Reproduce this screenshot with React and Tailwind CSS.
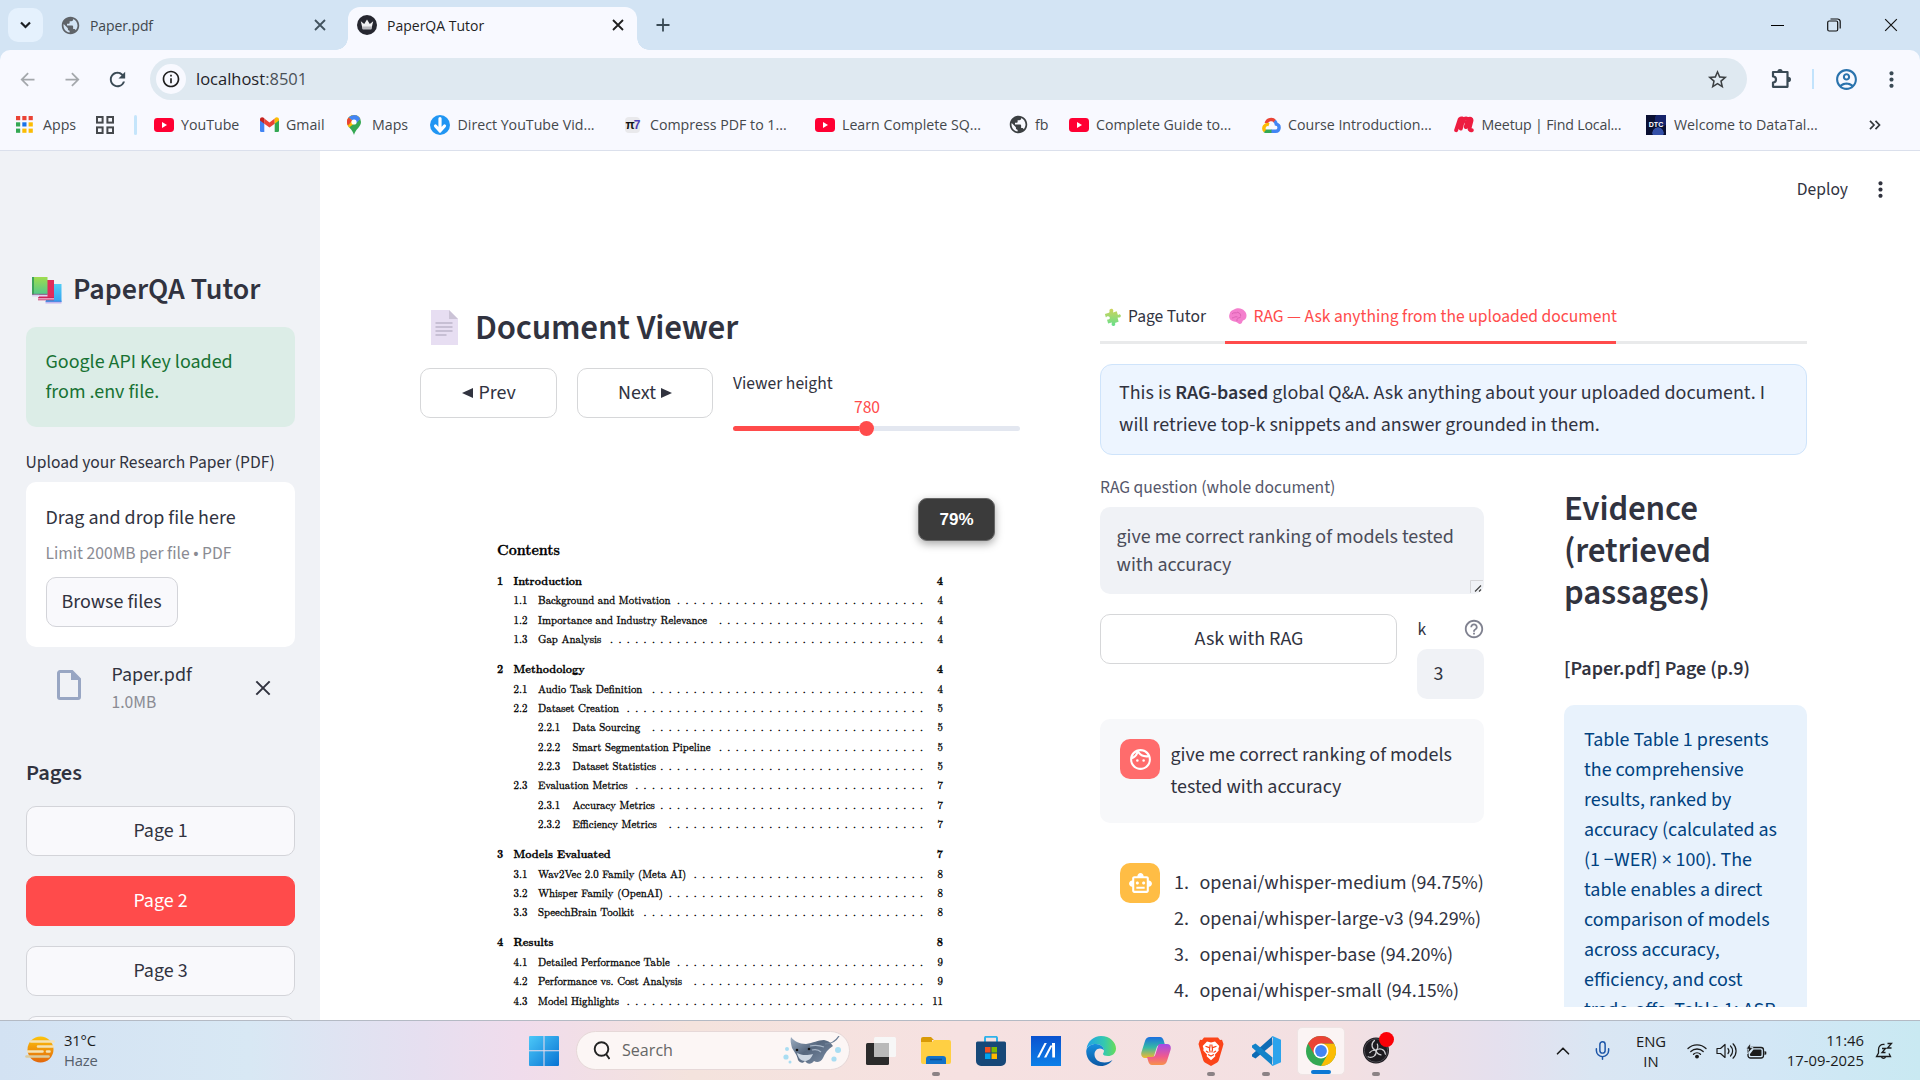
import React from 'react';
import {
  MdPublic, MdStarOutline, MdOutlineAccountCircle, MdOutlineInfo,
  MdHelpOutline, MdOutlineFace, MdOutlineSmartToy, MdArrowBack, MdArrowForward, MdRefresh, MdMoreVert,
} from 'react-icons/md';
import { ChevronUp, Mic } from 'lucide-react';

/* ---------- small drawings ---------- */

const Close = ({ size = 12, w = 1.8, color = '#1f1f1f' }) => (
  <svg width={size} height={size} viewBox="0 0 12 12" fill="none" stroke={color} strokeWidth={w}>
    <path d="M1 1L11 11M11 1L1 11" />
  </svg>
);

const Crown = () => (
  <svg width="20" height="20" viewBox="0 0 20 20">
    <circle cx="10" cy="10" r="10" fill="#262730" />
    <path d="M3.800 6.300l3.400 2.600L10 4.400l2.800 4.500 3.400-2.600-1.900 7.900H5.700z" fill="#f1f1f3" />
    <path d="M5.200 11.600h9.600l-.5 2.600H5.700z" fill="#b9b9bf" />
  </svg>
);

const AppsGrid = () => {
  const c = ['#ea4335', '#ea4335', '#ea4335', '#34a853', '#1a73e8', '#fbbc04', '#34a853', '#fbbc04', '#fbbc04'];
  return (
    <svg width="17" height="17" viewBox="0 0 17 17">
      {c.map((f, i) => <rect key={i} x={(i % 3) * 6.3} y={Math.floor(i / 3) * 6.3} width="4.2" height="4.2" fill={f} />)}
    </svg>
  );
};

const TabGroups = () => (
  <svg width="18" height="18" viewBox="0 0 18 18" fill="none" stroke="#46494d" strokeWidth="2">
    <rect x="1" y="1" width="5.6" height="5.6" /><rect x="11.4" y="1" width="5.6" height="5.6" />
    <rect x="1" y="11.4" width="5.6" height="5.6" /><rect x="11.4" y="11.4" width="5.6" height="5.6" />
  </svg>
);

const Extension = () => (
  <svg width="22" height="22" viewBox="0 0 22 22">
    <path d="M3 4h14.500v14.800H3v-4.300a3 3 0 0 0 0-6z" fill="none" stroke="#3a4a55" strokeWidth="2.200" strokeLinejoin="round" />
    <path d="M7.300 4a2.700 3 0 0 1 5.400 0zM18 8.700a3 2.700 0 0 1 0 5.400z" fill="#3a4a55" />
  </svg>
);

const YouTube = () => (
  <svg width="20" height="14" viewBox="0 0 20 14">
    <rect width="20" height="14" rx="3.4" fill="#ff0033" />
    <path d="M8 4l5 3-5 3z" fill="#fff" />
  </svg>
);

const Gmail = () => (
  <svg width="19" height="15" viewBox="0 0 19 15">
    <path d="M0 2.5L4.3 5.6V15H1.3A1.3 1.3 0 0 1 0 13.700z" fill="#4285f4" />
    <path d="M19 2.500L14.700 5.600V15h3A1.300 1.300 0 0 0 19 13.700z" fill="#34a853" />
    <path d="M4.300 1.500L9.500 5.400l5.200-3.900v5.200L9.500 10.600 4.300 6.700z" fill="#ea4335" />
    <path d="M0 2.500C0 .5 2.200-.5 3.700.8l.6.5v5.400L0 3.500z" fill="#c5221f" />
    <path d="M19 2.500c0-2-2.200-3-3.700-1.700l-.6.5v5.400L19 3.500z" fill="#fbbc04" />
  </svg>
);

const MapsPin = () => (
  <svg width="14" height="20" viewBox="0 0 14 20">
    <path d="M7 0a7 7 0 0 1 7 7c0 5-5.600 7-7 13C5.600 14 0 12 0 7a7 7 0 0 1 7-7z" fill="#34a853" />
    <path d="M7 0a7 7 0 0 1 6.300 4L2 12.400C.8 11 0 9.300 0 7a7 7 0 0 1 7-7z" fill="#fbbc04" />
    <path d="M7 0a7 7 0 0 1 6.300 4L9 8.500 1.600 2.600A7 7 0 0 1 7 0z" fill="#4285f4" />
    <path d="M1.600 2.600L5.200 5.700 1 10.600A7 7 0 0 1 1.600 2.600z" fill="#ea4335" />
    <circle cx="7" cy="7" r="2.600" fill="#fff" />
  </svg>
);

const BlueDown = () => (
  <svg width="20" height="20" viewBox="0 0 20 20">
    <circle cx="10" cy="10" r="10" fill="#2196f3" />
    <path d="M10 3.500v10M10 16l-4.500-5M10 16l4.500-5" stroke="#fff" strokeWidth="3.200" strokeLinecap="round" fill="none" />
  </svg>
);

const Pi = () => (
  <div className="flex h-[16px] w-[15px] items-center justify-center rounded-[4px] bg-[#e9e9ec] font-[Liberation_Sans] text-[12px] font-bold leading-none tracking-[-1px]">
    <span className="text-[#111]">π</span><span className="text-[#4a3fb5]">7</span>
  </div>
);

const Cloud = () => (
  <svg width="20" height="16" viewBox="0 0 20 16" fill="none" strokeWidth="3.400">
    <path d="M5.200 6.200A5.200 5.200 0 0 1 14 4.300" stroke="#ea4335" />
    <path d="M13.600 4A5.500 5.500 0 0 1 15.300 7.200 3.600 3.600 0 0 1 14.600 14.300H10" stroke="#4285f4" />
    <path d="M10.500 14.300H5.600a3.800 3.800 0 0 1-2-.6" stroke="#34a853" />
    <path d="M4 14A3.900 3.900 0 0 1 8 7.600" stroke="#fbbc04" />
  </svg>
);

const MeetupMark = () => (
  <svg width="20" height="17" viewBox="0 0 20 17" fill="none" stroke="#ed1c40" strokeWidth="4" strokeLinecap="round" strokeLinejoin="round">
    <path d="M2.200 14.200L5.800 3.200c1.600-1.400 3.400-.8 3.200.8L6.800 12.500M8.600 6.500l1.600-3c1.800-1.600 3.800-1 3.400 1L11.800 11M13 6.500l1.400-3c1.600-1.300 3.400-.6 3 1.200l-1.800 7c-.3 1.800.6 2.700 2.200 2.500" />
  </svg>
);

const Dtc = () => (
  <div className="flex h-[20px] w-[20px] items-center justify-center bg-[#0a1033] bg-[radial-gradient(circle_at_60%_90%,#3450a8_0_25%,transparent_27%),radial-gradient(circle_at_80%_20%,#16246b_0_30%,transparent_32%)] font-[Liberation_Sans] text-[7px] font-bold text-white">DTC</div>
);

const Books = () => (
  <svg width="30" height="27" viewBox="0 0 30 27">
    <defs>
      <linearGradient id="bg1" x1="0" y1="0" x2="0" y2="1"><stop stopColor="#9fdc4e" /><stop offset="1" stopColor="#55c98a" /></linearGradient>
      <linearGradient id="bg2" x1="0" y1="0" x2="0" y2="1"><stop stopColor="#52cdf6" /><stop offset="1" stopColor="#35a3f0" /></linearGradient>
    </defs>
    <rect x="14" y="7" width="15.500" height="18" fill="url(#bg2)" />
    <path d="M13.500 24.500h16v2h-16z" fill="#c3b4ee" /><path d="M13.500 23.700h16v1h-16z" fill="#3b7fdc" />
    <rect x="7" y="3" width="15" height="18" fill="#e12c5b" />
    <path d="M6 21h16v2H6z" fill="#f3c3dd" /><path d="M6 20.300h16v1H6zM6 22.500h16v.8H6z" fill="#c22158" />
    <rect x="0" y="0" width="15.500" height="17" fill="url(#bg1)" />
    <rect x="0" y="0" width="2" height="18" fill="#3fa35b" />
    <path d="M0 17.500h15.500v2H0z" fill="#dcd0f2" /><path d="M0 16.800h15.500v1H0z" fill="#7f6a8c" />
  </svg>
);

const PageEmoji = () => (
  <svg width="27" height="35" viewBox="0 0 27 35">
    <path d="M0 0h18l9 9v26H0z" fill="#e7def2" /><path d="M18 0l9 9h-9z" fill="#cbc3d6" />
    <path d="M4.500 13h17M4.500 17h17M4.500 21h17M4.500 25h11" stroke="#a79fb5" strokeWidth="1.200" />
  </svg>
);

const Puzzle = () => (
  <svg width="17" height="19" viewBox="0 0 17 19">
    <defs><linearGradient id="pz" x1="0" y1="0" x2="0" y2="1"><stop stopColor="#cfd35a" /><stop offset="1" stopColor="#66e08c" /></linearGradient></defs>
    <path d="M5.500 3c-.6-2.300 3-3.300 3.700-1 .3 1-.2 1.600-.1 2.400l3.600-1.100 1.200 3.600c1 .1 1.300-.7 2.100-.5 1.300.3 1 2.900-.4 3.100-.8.100-1.200-.3-2 .2l1 4-3.200 1c-.7.700.2 1.500-.4 2.500-.8 1.200-3.200.8-3.400-.8-.1-.8.4-1.200.2-1.800l-3.700.9-1-3.500c.6-.8 1.800-.200 2.500-1.200.8-1.300-.5-3-2.100-2.500-.8.300-1 1-1.700 1L.9 5.900l4-1.100c.6-.4.7-1.200.6-1.800z" fill="url(#pz)" />
  </svg>
);

const Brain = () => (
  <svg width="18" height="17" viewBox="0 0 18 17">
    <path d="M5 1.500C8-.5 13-.3 15.500 3c2.500 2.500 2.500 6 1 8-1.200 1.400-2.600 1-3 2.300-.4 2.500-2.800 3.500-4.600 1.700C7.500 13.600 5.500 14 3.500 13 .5 12-.6 8.600.6 6 1 3.500 2.800 2.300 5 1.500z" fill="#f47fcd" />
    <path d="M3 6c2-2.500 4 0 6-2M3 10c2 0 3-2 5.500-1M9 4.500c2 .5 3 2 2.500 4M8 13c-.5-2 1-3.500 3.500-3.500" stroke="#dc62b4" strokeWidth="1" fill="none" />
  </svg>
);

const FileIcon = () => (
  <svg width="24" height="30" viewBox="0 0 24 30">
    <path d="M3 1.500h12L22.500 9v18a1.500 1.500 0 0 1-1.500 1.500H3A1.500 1.500 0 0 1 1.500 27V3A1.500 1.500 0 0 1 3 1.500z" fill="none" stroke="#98a6c3" strokeWidth="3" />
    <path d="M14 1v9h9z" fill="#98a6c3" />
  </svg>
);

/* ---------- browser chrome ---------- */

const TabStrip = () => (
  <div className="flex h-[50px] items-center bg-[#d3e4f4] text-[14px]">
    <div className="ml-[8px] flex h-[34px] w-[35px] items-center justify-center rounded-[10px] bg-[#e5f1fd]">
      <svg width="11" height="8" viewBox="0 0 11 8" fill="none" stroke="#1b1f23" strokeWidth="2.200"><path d="M1 1.500l4.500 4.500L10 1.500" /></svg>
    </div>
    <div className="ml-[17px] flex w-[288px] items-center">
      <MdPublic size={21} color="#5f6368" className="shrink-0" />
      <span className="ml-[9px] w-[224px] tracking-[-0.1px] text-[#41474d]">Paper.pdf</span>
      <Close color="#41525e" />
    </div>
    <div className="relative mt-[7px] flex h-[43px] w-[289px] items-center rounded-t-[12px] bg-[#f8f9ff] pb-[7px]">
      <div className="absolute -left-[12px] bottom-0 h-[12px] w-[12px] bg-[radial-gradient(circle_at_0_0,transparent_11.500px,#f8f9ff_12px)]" />
      <div className="absolute -right-[12px] bottom-0 h-[12px] w-[12px] bg-[radial-gradient(circle_at_100%_0,transparent_11.500px,#f8f9ff_12px)]" />
      <div className="ml-[9px] shrink-0"><Crown /></div>
      <span className="ml-[10px] w-[225px] text-[#1f1f1f]">PaperQA Tutor</span>
      <Close />
    </div>
    <svg className="ml-[19px]" width="14" height="14" viewBox="0 0 14 14" stroke="#3a4a55" strokeWidth="1.800"><path d="M7 0.500v13M0.500 7h13" /></svg>
    <div className="ml-auto flex items-center pr-[22px]">
      <div className="h-[1px] w-[13px] bg-black" />
      <svg className="ml-[43px]" width="14" height="14" viewBox="0 0 14 14" fill="none" stroke="#111" strokeWidth="1.200">
        <rect x="0.700" y="3" width="10" height="10" rx="1.500" /><path d="M3.500 1h7A2.600 2.600 0 0 1 13.200 3.600v7" />
      </svg>
      <div className="ml-[43px]"><Close size={14} w={1} color="#111" /></div>
    </div>
  </div>
);

const Toolbar = () => (
  <div className="bg-[#d3e4f4]">
    <div className="flex h-[50px] items-center rounded-t-[10px] bg-[#f8f9ff] pt-[8px]">
      <div className="flex h-[42px] w-full items-center">
        <MdArrowBack className="ml-[17px]" size={21} color="#a4a8ac" />
        <MdArrowForward className="ml-[24px]" size={21} color="#a4a8ac" />
        <MdRefresh className="ml-[23px]" size={23} color="#3a4a55" />
        <div className="ml-[21px] flex h-[42px] w-[1597px] items-center rounded-full bg-[#dfe9f1] pl-[6px]">
          <div className="flex h-[30px] w-[30px] items-center justify-center rounded-full bg-[#f8f9ff]"><MdOutlineInfo size={20} color="#1f1f1f" /></div>
          <span className="ml-[10px] text-[16.500px] text-[#1f2328]">localhost<span className="text-[#4a5157]">:8501</span></span>
          <MdStarOutline className="ml-auto mr-[18px]" size={23} color="#3c4043" />
        </div>
        <div className="ml-[23px]"><Extension /></div>
        <div className="ml-[20px] h-[20px] w-[2px] bg-[#c2e3fc]" />
        <MdOutlineAccountCircle className="ml-[20px]" size={25} color="#2a73ad" />
        <MdMoreVert className="ml-[20px]" size={25} color="#3a4a55" />
      </div>
    </div>
  </div>
);

const Bookmark = ({ box, icon, iconBox = 'w-[27px]', children }) => (
  <div className={`flex shrink-0 items-center ${box}`}>
    <span className={`flex shrink-0 items-center ${iconBox}`}>{icon}</span>
    <span className="whitespace-nowrap">{children}</span>
  </div>
);

const Bookmarks = () => (
  <div className="flex h-[51px] items-center border-b border-[#dbe0ec] bg-[#f8f9ff] pl-[16px] text-[14.200px] text-[#44484c]">
    <Bookmark box="w-[80px]" icon={<AppsGrid />}>Apps</Bookmark>
    <TabGroups />
    <div className="ml-[20px] h-[20px] w-[3px] rounded bg-[#c5e5fb]" />
    <Bookmark box="ml-[17px] w-[106px]" icon={<YouTube />}>YouTube</Bookmark>
    <Bookmark box="w-[87px]" iconBox="w-[26px]" icon={<Gmail />}>Gmail</Bookmark>
    <Bookmark box="w-[83px]" iconBox="w-[25px]" icon={<MapsPin />}>Maps</Bookmark>
    <Bookmark box="w-[195px]" iconBox="w-[27.500px]" icon={<BlueDown />}>Direct YouTube Vid...</Bookmark>
    <Bookmark box="w-[190px]" iconBox="w-[25px]" icon={<Pi />}>Compress PDF to 1...</Bookmark>
    <Bookmark box="w-[193px]" icon={<YouTube />}>Learn Complete SQ...</Bookmark>
    <Bookmark box="w-[61px]" icon={<MdPublic size={21} color="#3c4043" />}>fb</Bookmark>
    <Bookmark box="w-[192px]" icon={<YouTube />}>Complete Guide to...</Bookmark>
    <Bookmark box="w-[193px]" iconBox="w-[27px]" icon={<Cloud />}>Course Introduction...</Bookmark>
    <Bookmark box="w-[192px] tracking-[-0.180px]" iconBox="w-[27.500px]" icon={<MeetupMark />}>Meetup | Find Local...</Bookmark>
    <Bookmark box="w-[223px]" iconBox="w-[28px]" icon={<Dtc />}>Welcome to DataTal...</Bookmark>
    <svg width="12" height="10" viewBox="0 0 12 10" fill="none" stroke="#33373b" strokeWidth="1.700"><path d="M1 .8L5 5 1 9.200M6.500 .8l4 4.200-4 4.200" /></svg>
  </div>
);

/* ---------- sidebar ---------- */

const PageButton = ({ children, active }) => (
  <div className={`flex h-[50px] shrink-0 items-center justify-center rounded-[10px] border ${active ? 'border-[#ff4b4b] bg-[#ff4b4b] text-white' : 'border-[#d3d4d9] bg-[#f9f9fc]'}`}>{children}</div>
);

const Sidebar = () => (
  <aside className="flex w-[320px] shrink-0 flex-col overflow-hidden bg-[#f0f2f6] pl-[26px] pr-[25px] pt-[121px]">
    <div className="flex h-[36px] items-center pl-[6px] text-[30px] font-semibold leading-[36px]">
      <Books /><span className="ml-[11px] whitespace-nowrap">PaperQA Tutor</span>
    </div>
    <div className="mt-[19px] h-[100px] shrink-0 rounded-[10px] bg-[#dcede7] py-[20px] pl-[19.500px] leading-[30px] text-[#177233]">Google API Key loaded<br />from .env file.</div>
    <div className="mt-[23px] h-[26px] whitespace-nowrap text-[17.500px] leading-[26px]"><span className="-ml-[0.500px]">Upload your Research Paper (PDF)</span></div>
    <div className="mt-[6px] h-[165px] shrink-0 rounded-[10px] bg-white px-[19.500px] pt-[21px]">
      <div className="leading-[30px]">Drag and drop file here</div>
      <div className="mt-[8px] text-[17.500px] leading-[26px] text-[#8a8b93]">Limit 200MB per file • PDF</div>
      <div className="mt-[10px] flex h-[50px] w-[132px] items-center justify-center rounded-[10px] border border-[#d3d4d9] bg-[#f9f9fc]">Browse files</div>
    </div>
    <div className="mt-[13px] flex h-[56px] shrink-0 items-center pl-[31px]">
      <div className="-mt-[7px]"><FileIcon /></div>
      <div className="ml-[30.500px] w-[143px]">
        <div className="leading-[30px]">Paper.pdf</div>
        <div className="text-[17.500px] leading-[26px] text-[#8a8b93]">1.0MB</div>
      </div>
      <Close size={16} w={1.500} color="#31333f" />
    </div>
    <div className="mt-[42px] h-[30px] text-[22.500px] font-semibold leading-[30px] tracking-[-0.110px]">Pages</div>
    <div className="mt-[18px] flex flex-col gap-[20px]">
      <PageButton>Page 1</PageButton>
      <PageButton active>Page 2</PageButton>
      <PageButton>Page 3</PageButton>
      <PageButton />
    </div>
  </aside>
);

/* ---------- document ---------- */

const TOC = [
  [0, '1', 'Introduction', 0, '4'],
  [1, '1.1', 'Background and Motivation', 30, '4'],
  [1, '1.2', 'Importance and Industry Relevance', 25, '4'],
  [1, '1.3', 'Gap Analysis', 38, '4'],
  [0, '2', 'Methodology', 0, '4'],
  [1, '2.1', 'Audio Task Definition', 33, '4'],
  [1, '2.2', 'Dataset Creation', 36, '5'],
  [2, '2.2.1', 'Data Sourcing', 33, '5'],
  [2, '2.2.2', 'Smart Segmentation Pipeline', 25, '5'],
  [2, '2.2.3', 'Dataset Statistics', 32, '5'],
  [1, '2.3', 'Evaluation Metrics', 35, '7'],
  [2, '2.3.1', 'Accuracy Metrics', 32, '7'],
  [2, '2.3.2', 'Efficiency Metrics', 31, '7'],
  [0, '3', 'Models Evaluated', 0, '7'],
  [1, '3.1', 'Wav2Vec 2.0 Family (Meta AI)', 28, '8'],
  [1, '3.2', 'Whisper Family (OpenAI)', 31, '8'],
  [1, '3.3', 'SpeechBrain Toolkit', 34, '8'],
  [0, '4', 'Results', 0, '8'],
  [1, '4.1', 'Detailed Performance Table', 30, '9'],
  [1, '4.2', 'Performance vs. Cost Analysis', 28, '9'],
  [1, '4.3', 'Model Highlights', 36, '11'],
];

const ROW = ['mt-[10.700px] font-bold', 'pl-[16.500px]', 'pl-[41px]'];
const NUM = ['w-[16.500px]', 'w-[24.500px]', 'w-[34.500px]'];

const Contents = () => (
  <div className="ml-[77px] mt-[101px] w-[446px] font-['Latin_Modern_Roman','CMU_Serif','Liberation_Serif',serif] text-[10.800px] text-black [-webkit-text-stroke:0.300px_black]">
    <div className="mb-[12px] h-[20px] text-[14px] font-bold leading-[20px]">Contents</div>
    {TOC.map(([lvl, n, t, dots, p], i) => (
      <div key={n} className={`flex h-[19.380px] items-center whitespace-nowrap leading-[19.380px] ${ROW[lvl]} ${i === 0 ? 'mt-0' : ''}`}>
        <span className={`shrink-0 ${NUM[lvl]}`}>{n}</span>
        <span>{t}</span>
        <span className="min-w-0 flex-1 text-right tracking-[5.380px]">{'.'.repeat(dots)}</span>
        <span className="w-[14.500px] shrink-0 text-right">{p}</span>
      </div>
    ))}
  </div>
);

const Viewer = () => (
  <section className="relative w-[600px] shrink-0">
    <div className="mt-[156px] flex h-[42px] items-center pl-[11px] text-[35px] font-semibold leading-[42px] tracking-[-0.175px]">
      <div className="-mt-[2px]"><PageEmoji /></div><span className="ml-[17px]">Document Viewer</span>
    </div>
    <div className="mt-[19px] flex gap-[20px]">
      <div className="flex h-[50px] w-[137px] items-center justify-center rounded-[10px] border border-[#d6d7d9]">
        <svg className="ml-[1px] mr-[5.500px]" width="11" height="10" viewBox="0 0 11 10"><path d="M11 0v10L0 5z" fill="#31333f" /></svg>Prev
      </div>
      <div className="flex h-[50px] w-[136px] items-center justify-center rounded-[10px] border border-[#d6d7d9]">
        Next<svg className="ml-[5px]" width="11" height="10" viewBox="0 0 11 10"><path d="M0 0v10l11-5z" fill="#31333f" /></svg>
      </div>
      <div className="w-[287px]">
        <div className="mt-[3px] text-[17.500px] leading-[26px]">Viewer height</div>
        <div className="flex h-[22px] w-[268px] justify-center text-[17.500px] leading-[22px] text-[#ff4b4b]">780</div>
        <div className="-mt-[1px] flex h-[20px] items-center">
          <div className="h-[5px] w-[126px] rounded-l bg-[#ff4b4b]" />
          <div className="h-[15px] w-[15px] rounded-full bg-[#ff4b4b]" />
          <div className="h-[5px] flex-1 rounded-r bg-[#e3e7f0]" />
        </div>
      </div>
    </div>
    <Contents />
    <div className="absolute left-[498px] top-[347px] flex h-[43px] w-[77px] items-center justify-center rounded-[9px] border border-[#666] bg-[#3b3b3b] font-[Liberation_Sans] text-[17px] font-bold text-white shadow-[0_3px_8px_rgba(0,0,0,0.350)]">79%</div>
  </section>
);

/* ---------- tutor panel ---------- */

const ranking = [
  'openai/whisper-medium (94.75%)', 'openai/whisper-large-v3 (94.29%)',
  'openai/whisper-base (94.20%)', 'openai/whisper-small (94.15%)',
];

const Evidence = () => (
  <div className="ml-[80px] flex h-[536px] w-[243px] flex-col overflow-hidden pt-[17px]">
    <div className="shrink-0 text-[35px] font-semibold leading-[42px] tracking-[-0.175px]">Evidence<br />(retrieved<br />passages)</div>
    <div className="mt-[40px] h-[30px] shrink-0 font-semibold leading-[30px]">[Paper.pdf] Page (p.9)</div>
    <div className="mt-[21px] shrink-0 whitespace-nowrap rounded-t-[10px] bg-[#e8f2fc] px-[20px] py-[20px] leading-[30px] text-[#004280]">
      Table Table 1 presents<br />the comprehensive<br />results, ranked by<br />accuracy (calculated as<br />(1 −WER) × 100). The<br />table enables a direct<br />comparison of models<br />across accuracy,<br />efficiency, and cost<br />trade-offs. Table 1: ASR
    </div>
  </div>
);

const Tutor = () => (
  <section className="ml-[80px] w-[707px] shrink-0 pt-[139px]">
    <div className="relative flex h-[54px] border-b-[3px] border-[#e9eaeb] pt-[14px] text-[17.500px] leading-[26px]">
      <div className="flex h-[26px] w-[125px] items-center pl-[4px]"><Puzzle /><span className="ml-[7px]">Page Tutor</span></div>
      <div className="flex h-[40px] w-[391px] items-start border-b-[3px] border-[#ff4b4b] pl-[4px] text-[#ff4b4b]">
        <span className="mt-[4px]"><Brain /></span><span className="ml-[6.500px] whitespace-nowrap">RAG — Ask anything from the uploaded document</span>
      </div>
    </div>
    <div className="mt-[20px] h-[91px] rounded-[12px] border border-[#cfe4fb] bg-[#edf5ff] px-[18px] pt-[12px] leading-[32px]">
      This is <b className="font-semibold">RAG-based</b> global Q&amp;A. Ask anything about your uploaded document. I<br />will retrieve top-k snippets and answer grounded in them.
    </div>
    <div className="mt-[16px] flex">
      <div className="w-[384px] shrink-0">
        <div className="mt-[4px] text-[17.500px] leading-[26px] text-[#55576a]">RAG question (whole document)</div>
        <div className="relative mt-[6px] h-[87px] rounded-[10px] bg-[#f0f2f6] px-[16.500px] pt-[16px] leading-[28px] text-[#4a4c59]">
          give me correct ranking of models tested<br />with accuracy
          <svg className="absolute bottom-[1px] right-[1px]" width="13" height="13" viewBox="0 0 13 13" fill="none">
            <path d="M.5 13V.5H13" stroke="#d5d5d8" /><path d="M5 11.500L11 5.500M9 11.500L11 9.500" stroke="#444" strokeWidth="1.200" />
          </svg>
        </div>
        <div className="mt-[20px] flex">
          <div className="flex h-[50px] w-[297px] items-center justify-center rounded-[10px] border border-[#d6d7d9] pl-[1px]">Ask with RAG</div>
          <div className="ml-[20px] w-[67px]">
            <div className="mt-[3px] flex h-[26px] items-center justify-between text-[17.500px] leading-[26px]"><span className="pl-[0.500px]">k</span><MdHelpOutline size={22} color="#808290" className="-mr-[1px] -mt-[2px]" /></div>
            <div className="mt-[6px] h-[50px] rounded-[10px] bg-[#f0f2f6] pl-[16.500px] leading-[50px]">3</div>
          </div>
        </div>
        <div className="mt-[20px] flex h-[104px] rounded-[10px] bg-[#f7f8fa] p-[20px]">
          <div className="flex h-[40px] w-[40px] shrink-0 items-center justify-center rounded-[10px] bg-[#ff6c6c]"><MdOutlineFace size={25} color="#fff" /></div>
          <div className="ml-[10.500px] whitespace-nowrap leading-[32px]">give me correct ranking of models<br />tested with accuracy</div>
        </div>
        <div className="mt-[20px] flex h-[166px] pl-[20px] pt-[20px]">
          <div className="flex h-[40px] w-[40px] shrink-0 items-center justify-center rounded-[10px] bg-[#ffbd45]"><MdOutlineSmartToy size={25} color="#fff" /></div>
          <div className="ml-[14px] mt-[2px] whitespace-nowrap">
            {ranking.map((r, i) => (
              <div key={r} className="flex h-[36px] items-center leading-[36px]"><span className="w-[25.500px]">{i + 1}.</span>{r}</div>
            ))}
          </div>
        </div>
      </div>
      <Evidence />
    </div>
  </section>
);

/* ---------- taskbar ---------- */

const WinLogo = () => (
  <svg width="30" height="30" viewBox="0 0 30 30">
    <defs><linearGradient id="wl" x1="0" y1="0" x2="1" y2="1"><stop stopColor="#4cc8f8" /><stop offset="1" stopColor="#0873d3" /></linearGradient></defs>
    <path d="M1 0h13.500v14.300H0V1a1 1 0 0 1 1-1zM15.500 0H29a1 1 0 0 1 1 1v13.300H15.500zM0 15.300h14.500V30H1a1 1 0 0 1-1-1zM15.500 15.300H30V29a1 1 0 0 1-1 1H15.500z" fill="url(#wl)" />
  </svg>
);

const Ray = () => (
  <svg width="60" height="30" viewBox="0 0 60 30">
    <defs>
      <linearGradient id="ray" x1="0" y1="0" x2="1" y2="1"><stop stopColor="#9fb0c4" /><stop offset=".45" stopColor="#56677e" /><stop offset="1" stopColor="#7f91a8" /></linearGradient>
    </defs>
    <path d="M8 1c3 4 8 7 15 7 7-1 12-4 18-4 5 1 7 3 9 6-5 3-8 7-10 12-2 4-6 5-9 3-3 4-7 3-9 0-2 3-5 2-7-1-1-5-3-7-6-12C8 8 7 4 8 1z" fill="url(#ray)" />
    <path d="M42 8c6 0 11-3 14-8" stroke="#6d7f96" strokeWidth="1.300" fill="none" />
    <path d="M14 17c4 2 9 3 16 1-2 5-5 7-8 7-4 0-7-3-8-8z" fill="#ccd6e2" />
    <path d="M27 10c5-1 9-1 14 1M29 14c4-1 7 0 9 2" stroke="#a9b7c8" strokeWidth="1.200" fill="none" />
    <circle cx="14" cy="14" r="1.300" fill="#111" /><circle cx="26" cy="13" r="1.300" fill="#111" />
    <g fill="#a9ddf2"><circle cx="4" cy="13" r="2" /><circle cx="3" cy="21" r="2.600" /><circle cx="55" cy="14" r="3" /><circle cx="51" cy="23" r="2.600" /><circle cx="7" cy="26" r="1.500" /></g>
  </svg>
);

const TaskView = () => (
  <svg width="30" height="28" viewBox="0 0 30 28">
    <rect x="0" y="6" width="23" height="22" rx="1.500" fill="#2b2b2b" />
    <rect x="8" y="0" width="22" height="20" rx="1.500" fill="#f7f7f7" />
    <path d="M8 6h15v14H9.500A1.500 1.500 0 0 1 8 18.500z" fill="#b9b9b9" />
  </svg>
);

const Folder = () => (
  <svg width="30" height="27" viewBox="0 0 30 27">
    <path d="M0 2a2 2 0 0 1 2-2h8l3 3h-2v6H0z" fill="#d99a06" />
    <path d="M0 5h11l2-2h15a2 2 0 0 1 2 2v20a2 2 0 0 1-2 2H2a2 2 0 0 1-2-2z" fill="#ffcf43" />
    <path d="M5 27v-5a3 3 0 0 1 3-3h14a3 3 0 0 1 3 3v5z" fill="#1272c9" /><path d="M9 22.500h12" stroke="#0b4f96" strokeWidth="1.500" />
  </svg>
);

const Store = () => (
  <svg width="30" height="30" viewBox="0 0 30 30">
    <path d="M9 6V2a1.200 1.200 0 0 1 1.200-1.200h9.600A1.200 1.200 0 0 1 21 2v4" stroke="#2fb2ea" strokeWidth="2" fill="none" />
    <path d="M0 7a1.500 1.500 0 0 1 1.500-1.500h27A1.500 1.500 0 0 1 30 7v18a5 5 0 0 1-5 5H5a5 5 0 0 1-5-5z" fill="#174878" />
    <path d="M9 11h5.500v5.500H9z" fill="#f25022" /><path d="M15.500 11H21v5.500h-5.500z" fill="#7fba00" /><path d="M9 17.500h5.500V23H9z" fill="#00a4ef" /><path d="M15.500 17.500H21V23h-5.500z" fill="#ffb900" />
  </svg>
);

const MyAsus = () => (
  <svg width="30" height="30" viewBox="0 0 30 30">
    <defs><linearGradient id="ma" x1="0" y1="0" x2="0" y2="1"><stop stopColor="#0a52cf" /><stop offset="1" stopColor="#0c80e8" /></linearGradient></defs>
    <rect width="30" height="30" fill="url(#ma)" />
    <path d="M6 21.500L13.500 7h2.300L8.300 21.500zM13 21.500l6.300-12h2.200L15.300 21.500z" fill="#fff" /><path d="M21 7h3v14.500h-2.700z" fill="#fff" />
  </svg>
);

const Edge = () => (
  <svg width="30" height="30" viewBox="0 0 30 30">
    <defs>
      <linearGradient id="eg" x1="0" y1=".3" x2="1" y2=".3"><stop stopColor="#1fa2e8" /><stop offset=".6" stopColor="#34c8b0" /><stop offset="1" stopColor="#68dd58" /></linearGradient>
      <linearGradient id="eb" x1="0" y1="0" x2="0" y2="1"><stop stopColor="#1790df" /><stop offset="1" stopColor="#0c59a4" /></linearGradient>
    </defs>
    <path d="M.5 13C1.500 5.500 7.500 0 15 0c9 0 15 6.500 15 12.500 0 5-4 7.500-8 7.500-3 0-5-1-5-2 0-.8 1-1.300 1-3.500C18 11 14.500 8 10 8 5 8 1.500 10.500.5 13z" fill="url(#eg)" />
    <path d="M.3 14.500C1 10.500 5 8 10 8c4.500 0 8 3 8 6.500-.5-1-2-2-4-2-3.500 0-5.500 3-5.500 6 0 5 4.500 8 10 8 3.500 0 6.500-1.500 8-2.500C24 27.500 20 30 15 30 6.500 30-.5 23 .3 14.500z" fill="url(#eb)" />
  </svg>
);

const Copilot = () => (
  <svg width="30" height="28" viewBox="0 0 30 28">
    <defs>
      <linearGradient id="c1" x1="0" y1="0" x2="0" y2="1"><stop stopColor="#1b6ee0" /><stop offset=".5" stopColor="#35b9a5" /><stop offset="1" stopColor="#f5b82e" /></linearGradient>
      <linearGradient id="c2" x1="0" y1="0" x2="0" y2="1"><stop stopColor="#a34be8" /><stop offset=".6" stopColor="#f05a8e" /><stop offset="1" stopColor="#f7924a" /></linearGradient>
    </defs>
    <path d="M9 0h10c2 0 3 1.500 3.500 3L24 8h-5c-2 0-3 1-3.500 3L13 19c-.5 2-1.500 2-3 2H4c-3 0-4.500-2.500-3.500-6L4 4c.8-2.500 2.500-4 5-4z" fill="url(#c1)" />
    <path d="M21 28H11c-2 0-3-1.500-3.500-3L6 20h5c2 0 3-1 3.500-3L17 9c.5-2 1.500-2 3-2h6c3 0 4.500 2.500 3.500 6L26 24c-.8 2.500-2.500 4-5 4z" fill="url(#c2)" />
  </svg>
);

const VsCode = () => (
  <svg width="30" height="30" viewBox="0 0 30 30">
    <path d="M21.500 8.500L4.500 22.500 1 20.500v-2L21 .8z" fill="#0d6bb5" />
    <path d="M21.500 21.500L4.500 7.500 1 9.500v2l20 17.700z" fill="#1383c9" />
    <path d="M21.500 0L30 3.800v22.400L21.500 30l-1-1 1.500-1V2l-1.500-1z" fill="#2ba3ec" />
  </svg>
);

const Chrome = () => (
  <svg width="30" height="30" viewBox="0 0 30 30">
    <circle cx="15" cy="15" r="15" fill="#34a853" />
    <path d="M28 7.500A15 15 0 0 1 15 30l6.500-11.300L15 7.500z" fill="#fbbc04" />
    <path d="M2 7.500A15 15 0 0 1 28 7.500H15L8.500 18.700z" fill="#ea4335" />
    <circle cx="15" cy="15" r="7.500" fill="#fff" /><circle cx="15" cy="15" r="5.900" fill="#4285f4" />
  </svg>
);

const Brave = () => (
  <svg width="26" height="30" viewBox="0 0 26 30">
    <path d="M6 1.500h14L22 4l2-.3L25.500 8l-.8 3-4 13.500c-.3.800-.7 1.300-1.500 1.900L13 30l-6.200-3.600c-.8-.6-1.200-1.100-1.500-1.900L1.300 11 .5 8 2 3.700 4 4z" fill="#fb4419" />
    <path d="M9 5.500l4 .9 4-.9L21.300 10l-.9 2.800.3 1.700-3.700 4 .3 1.800-4.300 4-4.300-4 .3-1.800-3.700-4 .3-1.700L4.700 10z" fill="#fff" />
    <path d="M7.500 10.200l3.800 1.400M18.500 10.200l-3.800 1.400M12.200 8.500l-.7 5 .7 3M13.800 8.500l.7 5-.7 3M10 18.500l3 1.500 3-1.500M8 15l2.500 1.500M18 15l-2.500 1.500" stroke="#fb4419" strokeWidth="1.200" fill="none" />
  </svg>
);

const Obs = () => (
  <svg width="26" height="27" viewBox="0 0 26 27">
    <circle cx="13" cy="13.500" r="13" fill="#1d1b20" />
    <circle cx="13" cy="13.500" r="11.700" fill="none" stroke="#4b4a50" strokeWidth="1" />
    <g fill="none" stroke="#d0d0d3" strokeWidth="1.200" strokeLinecap="round">
      <path id="blade" d="M13 13.500C8.500 12 7.500 6.500 11.500 3.500M13 13.500c1.800-1.800 2.300-4 1.300-6.500" />
      <use href="#blade" transform="rotate(120 13 13.500)" />
      <use href="#blade" transform="rotate(240 13 13.500)" />
    </g>
  </svg>
);

const TaskApp = ({ children, running, active }) => (
  <div className={`relative flex h-[48px] w-[48px] items-center justify-center ${active ? 'rounded-[5px] border border-[#efe4e4] bg-[#fbf4f4]' : ''}`}>
    {children}
    {running && <div className="absolute -bottom-[1px] left-[20px] h-[4px] w-[8px] rounded-full bg-[#8b8285]" />}
    {active && <div className="absolute bottom-0 left-[13px] h-[4px] w-[20px] rounded-full bg-[#0c78d4]" />}
  </div>
);

const Weather = () => (
  <svg width="30" height="27" viewBox="0 0 30 27">
    <defs><linearGradient id="sun" x1="0" y1="0" x2="0" y2="1"><stop stopColor="#fdc40c" /><stop offset="1" stopColor="#e2660b" /></linearGradient></defs>
    <circle cx="15.500" cy="13.500" r="13" fill="url(#sun)" />
    <g stroke="#f4e2b6" strokeWidth="2.600" strokeLinecap="round">
      <path d="M6 5.500h22.500M13 10.500h15M3 15.500h14.500M22 15.500h2.500" /><path d="M1.500 20.500h22" stroke="#dccb9d" />
    </g>
  </svg>
);

const Wifi = () => (
  <svg width="20" height="16" viewBox="0 0 20 16" fill="none" stroke="#1b1b1b" strokeWidth="1.300" strokeLinecap="round">
    <path d="M1 5.500a13 13 0 0 1 18 0M3.800 8.500a9 9 0 0 1 12.400 0M6.500 11.300a5 5 0 0 1 7 0" /><circle cx="10" cy="13.600" r="1.300" fill="#1b1b1b" />
  </svg>
);

const Speaker = () => (
  <svg width="21" height="18" viewBox="0 0 21 18" fill="none" stroke="#1b1b1b" strokeWidth="1.200" strokeLinecap="round" strokeLinejoin="round">
    <path d="M1 6.500h3.500L9 2.500v13L4.500 11.500H1zM12 6.500a4 4 0 0 1 0 5M14.500 4a7 7 0 0 1 0 10M17 1.800a10 10 0 0 1 0 14.400" />
  </svg>
);

const Battery = () => (
  <svg width="21" height="16" viewBox="0 0 21 16">
    <rect x="2" y="4.500" width="15.500" height="10.500" rx="2.500" fill="none" stroke="#1b1b1b" strokeWidth="1.300" />
    <path d="M7.500 6.500h7a1 1 0 0 1 1 1v4.500a1 1 0 0 1-1 1h-9.500a1 1 0 0 1-1-1v-1z" fill="#1b1b1b" /><path d="M18.500 8v4l1.800-.8V8.800z" fill="#1b1b1b" />
    <path d="M4.500 0L0 6h2.500L1.500 11 7 4.500H4.300z" fill="#1b1b1b" stroke="#d6e7f4" strokeWidth=".8" />
  </svg>
);

const Bell = () => (
  <svg width="18" height="18" viewBox="0 0 18 18" fill="none" stroke="#1b1b1b" strokeWidth="1.300">
    <path d="M9.500 2.500C6 2 3.500 4 3.500 7.500v3.500L1.500 14.500h14L14 11.500M6.500 15a2.200 2.200 0 0 0 4 0M7 6.500h3.500L7 10.500h3.500M12.500 1.500h4l-4 4.500h4" />
  </svg>
);

const Taskbar = () => (
  <footer className="flex h-[60px] items-center border-t border-[#b4bac4] bg-[linear-gradient(90deg,#d3e2f3_0%,#d8e8f4_13%,#e6dff0_22%,#f0dcec_27%,#f4e3dd_36%,#f6e1e1_50%,#f3e0e2_70%,#e5e0ee_78%,#dae6f3_83%,#d3e7f6_92%,#c9e9f2_100%)] text-[14.800px] text-[#1b1b1b]">
    <div className="ml-[25px] flex w-[504px] items-center">
      <div className="-mt-[2px]"><Weather /></div>
      <div className="-mt-[2px] ml-[9px] leading-[20px] tracking-[-0.200px]"><div>31°C</div><div className="text-[#55606b]">Haze</div></div>
    </div>
    <WinLogo />
    <div className="ml-[17px] flex h-[39px] w-[274px] items-center rounded-full border border-[#e6d8d8] bg-[#fcf6f5] pl-[14px]">
      <svg className="shrink-0" width="19" height="19" viewBox="0 0 19 19" fill="none" stroke="#222" strokeWidth="1.900"><circle cx="10.500" cy="8" r="6.800" /><path d="M6 13l-5 5.500" stroke="none" /><path d="M15 13l3.500 5" /></svg>
      <span className="ml-[12px] w-[161px] shrink-0 text-[16.100px] text-[#666]">Search</span>
      <Ray />
    </div>
    <div className="ml-[7px] flex gap-[7px]">
      <TaskApp><TaskView /></TaskApp>
      <TaskApp running><Folder /></TaskApp>
      <TaskApp><Store /></TaskApp>
      <TaskApp><MyAsus /></TaskApp>
      <TaskApp><Edge /></TaskApp>
      <TaskApp><Copilot /></TaskApp>
      <TaskApp running><Brave /></TaskApp>
      <TaskApp running><VsCode /></TaskApp>
      <TaskApp active><Chrome /></TaskApp>
      <TaskApp running>
        <Obs />
        <div className="absolute left-[27px] top-[5px] h-[15px] w-[15px] rounded-full bg-[#fb0007]" />
      </TaskApp>
    </div>
    <div className="ml-[152px] flex items-center">
      <ChevronUp size={22} strokeWidth={1.800} />
      <Mic className="ml-[18px]" size={21} strokeWidth={1.700} color="#1d56a8" />
      <div className="ml-[21px] w-[34px] text-center leading-[20px]"><div>ENG</div><div>IN</div></div>
      <div className="ml-[19px]"><Wifi /></div>
      <div className="ml-[9px]"><Speaker /></div>
      <div className="ml-[9px]"><Battery /></div>
      <div className="-mt-[2px] ml-[17px] w-[80px] whitespace-nowrap text-right leading-[20px]"><div>11:46</div><div>17-09-2025</div></div>
      <div className="ml-[11px]"><Bell /></div>
    </div>
  </footer>
);

export default function App() {
  return (
    <div className="flex h-[1080px] w-[1920px] flex-col overflow-hidden bg-white font-['Segoe_UI','Open_Sans',sans-serif]">
      <TabStrip />
      <Toolbar />
      <Bookmarks />
      <main className="flex h-[869px] font-['Source_Sans_Pro','Source_Sans_3','Noto_Sans_CJK_SC',sans-serif] text-[20px] text-[#31333f]">
        <Sidebar />
        <div className="relative flex flex-1 pl-[100px]">
          <div className="absolute right-[27px] top-[26px] flex items-center text-[17.500px] leading-[26px]">
            Deploy<MdMoreVert className="ml-[20px] -mt-[2px]" size={25} />
          </div>
          <Viewer />
          <Tutor />
        </div>
      </main>
      <Taskbar />
    </div>
  );
}
